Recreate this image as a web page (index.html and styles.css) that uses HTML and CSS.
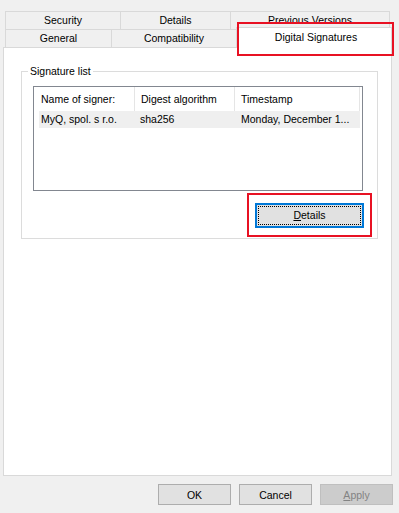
FILE: index.html
```html
<!DOCTYPE html>
<html lang="en">
<head>
  <meta charset="UTF-8"/>
  <title>Properties – Digital Signatures</title>
  <link rel="stylesheet" href="styles.css">
</head>
<body>

  <div class="dialog">
    <div class="tabs">
      <div class="tab-row">
        <div class="tab tab-security">Security</div>
        <div class="tab tab-details">Details</div>
        <div class="tab tab-versions">Previous Versions</div>
      </div>
      <div class="tab-row">
        <div class="tab tab-general">General</div>
        <div class="tab tab-compat">Compatibility</div>
        <div class="tab tab-active">Digital Signatures<span class="mark mark-tab"></span></div>
      </div>
    </div>

    <div class="panel">
      <fieldset class="group">
        <legend>Signature list</legend>
        <div class="list">
          <div class="list-head">
            <div class="col col-name">Name of signer:</div>
            <div class="col col-digest">Digest algorithm</div>
            <div class="col col-time">Timestamp</div>
          </div>
          <div class="list-row">
            <div class="cell cell-name">MyQ, spol. s r.o.</div>
            <div class="cell cell-digest">sha256</div>
            <div class="cell cell-time">Monday, December 1...</div>
          </div>
        </div>
        <div class="actions">
          <div class="mark mark-btn">
            <button class="btn btn-focus"><span><u>D</u>etails</span></button>
          </div>
        </div>
      </fieldset>
    </div>

    <div class="footer">
      <button class="btn">OK</button>
      <button class="btn">Cancel</button>
      <button class="btn btn-disabled"><u>A</u>pply</button>
    </div>
  </div>

</body>
</html>
```

FILE: styles.css
```css
body {
  margin: 0;
  background: #f0f0f0;
  font-family: "Liberation Sans", Arial, sans-serif;
  font-size: 10.5px;
  color: #000;
}
.dialog {
  padding-top: 11px;
}

/* tabs */
.tabs {
  margin-left: 5px;
}
.tab-row {
  display: flex;
}
.tab {
  box-sizing: border-box;
  height: 18px;
  line-height: 17px;
  border: 1px solid #d9d9d9;
  border-bottom: none;
  background: #f0f0f0;
  text-align: center;
  white-space: nowrap;
}
.tab + .tab {
  margin-left: -1px;
}
.tab-security { width: 116px; }
.tab-details { width: 111px; }
.tab-versions { width: 160px; }
.tab-general { width: 107px; }
.tab-compat { width: 126px; }
.tab-active {
  position: relative;
  z-index: 1;
  width: 156px;
  height: 21px;
  margin-top: -2px;
  margin-bottom: -1px;
  line-height: 18px;
  background: #fff;
  padding-left: 4px;
}

.mark {
  border: 2px solid #e81123;
  box-sizing: border-box;
}
.mark-tab {
  position: absolute;
  left: 0;
  top: -6px;
  width: 157px;
  height: 34px;
}

/* panel */
.panel {
  box-sizing: border-box;
  width: 389px;
  height: 429px;
  margin-left: 3px;
  border: 1px solid #d9d9d9;
  background: #fff;
  padding-top: 17px;
}
.group {
  margin: 0 13px 0 17px;
  padding: 8px 14px 1px 11px;
  border: 1px solid #dcdcdc;
}
.group legend {
  margin-left: -5px;
  padding: 0 2px;
  line-height: 13px;
}

.list {
  box-sizing: border-box;
  height: 105px;
  border: 1px solid #828790;
  background: #fff;
}
.list-head {
  display: flex;
  height: 24px;
}
.col {
  box-sizing: border-box;
  line-height: 24px;
  border-right: 1px solid #e5e5e5;
  white-space: nowrap;
}
.col-name { width: 101px; padding-left: 7px; }
.col-digest { width: 100px; padding-left: 6px; }
.col-time { width: 125px; padding-left: 6px; }

.list-row {
  display: flex;
  width: 321px;
  height: 17px;
  margin-left: 5px;
  background: #efefef;
  line-height: 17px;
  white-space: nowrap;
}
.cell {
  box-sizing: border-box;
  overflow: hidden;
}
.cell-name { width: 96px; padding-left: 2px; }
.cell-digest { width: 100px; padding-left: 5px; }
.cell-time { width: 125px; padding-left: 6px; }

.actions {
  display: flex;
  justify-content: flex-end;
  margin-top: 2px;
  margin-right: -9px;
}
.mark-btn {
  padding: 8px 6px 7px;
}

/* buttons */
.btn {
  box-sizing: border-box;
  width: 73px;
  height: 21px;
  padding: 0;
  border: 1px solid #adadad;
  background: #e1e1e1;
  font-family: inherit;
  font-size: 10.5px;
  color: #000;
}
.btn-focus {
  display: block;
  width: 109px;
  height: 25px;
  border: 2px solid #0078d7;
  padding: 1px;
}
.btn-focus span {
  display: block;
  height: 100%;
  box-sizing: border-box;
  border: 1px dotted #000;
  line-height: 17px;
}
.btn-disabled {
  border-color: #bfbfbf;
  background: #cccccc;
  color: #838383;
}

.footer {
  display: flex;
  justify-content: flex-end;
  gap: 8px;
  margin-top: 8px;
  padding-right: 6px;
}
```
